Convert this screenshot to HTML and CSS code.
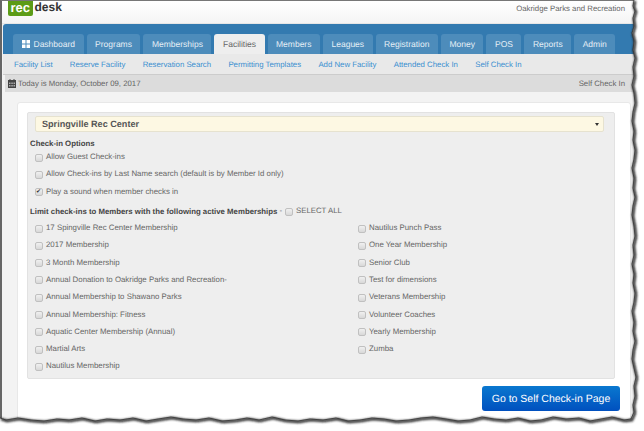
FILE: index.html
```html
<!DOCTYPE html>
<html lang="en">
<head>
    <meta charset="UTF-8">
    <title>Self Check-in Setup</title>
    <link rel="stylesheet" href="styles.css">
</head>
<body>
    <div class="window">
        <header class="top">
            <div class="logo"><span class="logo-rec">rec</span><span class="logo-desk">desk</span></div>
            <div class="org">Oakridge Parks and Recreation</div>
        </header>

        <nav class="tabs">
            <a class="tab">
                <svg class="dash-icon" width="8" height="8" viewBox="0 0 8 8"><path fill="#fff" d="M0 0h3.5v3.5H0zM4.500 0H8v3.500H4.500zM0 4.500h3.500V8H0zM4.500 4.500H8V8H4.500z"/></svg>
                Dashboard
            </a>
            <a class="tab">Programs</a>
            <a class="tab">Memberships</a>
            <a class="tab active">Facilities</a>
            <a class="tab">Members</a>
            <a class="tab">Leagues</a>
            <a class="tab">Registration</a>
            <a class="tab">Money</a>
            <a class="tab">POS</a>
            <a class="tab">Reports</a>
            <a class="tab">Admin</a>
        </nav>

        <div class="subnav">
            <a>Facility List</a>
            <a>Reserve Facility</a>
            <a>Reservation Search</a>
            <a>Permitting Templates</a>
            <a>Add New Facility</a>
            <a>Attended Check In</a>
            <a>Self Check In</a>
        </div>

        <div class="datebar">
            <span class="date">
                <svg width="8" height="9" viewBox="0 0 8 9"><path fill="#444" d="M0 1h8v8H0z"/><path fill="#444" d="M1.500 0h1v2h-1zM5.500 0h1v2h-1z"/><path fill="#aaa" d="M1 3.500h1.500V5H1zM3.300 3.500h1.500V5H3.300zM5.500 3.500H7V5H5.500zM1 6h1.500v1.500H1zM3.300 6h1.500v1.500H3.300zM5.500 6H7v1.500H5.500z"/></svg>
                Today is Monday, October 09, 2017
            </span>
            <span>Self Check In</span>
        </div>

        <main class="content">
            <div class="card">
                <section class="panel">
                    <div class="select">
                        <span>Springville Rec Center</span>
                        <i class="caret"></i>
                    </div>

                    <h4 class="heading">Check-in Options</h4>
                    <label class="row"><input type="checkbox"> Allow Guest Check-ins</label>
                    <label class="row"><input type="checkbox"> Allow Check-ins by Last Name search (default is by Member Id only)</label>
                    <label class="row"><input type="checkbox" checked> Play a sound when member checks in</label>

                    <h4 class="heading limit">Limit check-ins to Members with the following active Memberships
                        <span class="select-all">- <input type="checkbox"> SELECT ALL</span>
                    </h4>

                    <div class="columns">
                        <div class="col col-left">
                            <label class="row"><input type="checkbox"> 17 Spingville Rec Center Membership</label>
                            <label class="row"><input type="checkbox"> 2017 Membership</label>
                            <label class="row"><input type="checkbox"> 3 Month Membership</label>
                            <label class="row"><input type="checkbox"> Annual Donation to Oakridge Parks and Recreation-</label>
                            <label class="row"><input type="checkbox"> Annual Membership to Shawano Parks</label>
                            <label class="row"><input type="checkbox"> Annual Membership: Fitness</label>
                            <label class="row"><input type="checkbox"> Aquatic Center Membership (Annual)</label>
                            <label class="row"><input type="checkbox"> Martial Arts</label>
                            <label class="row"><input type="checkbox"> Nautilus Membership</label>
                        </div>
                        <div class="col">
                            <label class="row"><input type="checkbox"> Nautilus Punch Pass</label>
                            <label class="row"><input type="checkbox"> One Year Membership</label>
                            <label class="row"><input type="checkbox"> Senior Club</label>
                            <label class="row"><input type="checkbox"> Test for dimensions</label>
                            <label class="row"><input type="checkbox"> Veterans Membership</label>
                            <label class="row"><input type="checkbox"> Volunteer Coaches</label>
                            <label class="row"><input type="checkbox"> Yearly Membership</label>
                            <label class="row"><input type="checkbox"> Zumba</label>
                        </div>
                    </div>
                </section>

                <div class="actions">
                    <button class="go-btn">Go to Self Check-in Page</button>
                </div>
            </div>
        </main>
    </div>

    <!-- torn paper edge of the screenshot -->
    <svg class="torn" width="644" height="431" viewBox="0 0 644 431">
        <defs>
            <filter id="edge-blur" x="-5%" y="-5%" width="110%" height="110%">
                <feGaussianBlur stdDeviation="1"/>
            </filter>
            <path id="tear-line" d="M634 0L633 6L635 11L633 18L634 26L632 33L634 41L633 50L635 58L633 67L634 76L632 85L634 93L635 103L633 112L632 121L634 131L633 140L635 150L634 159L632 168L634 178L633 188L635 197L633 206L632 215L634 226L635 236L633 245L634 255L632 264L634 274L633 283L635 293L634 302L632 311L634 322L633 331L635 341L633 350L632 359L634 368L636 377L634 386L635 396L633 405L634 412L631 419L624 420L612 417L601 419L590 421L579 418L566 419L553 417L541 420L530 421L518 418L506 420L494 419L482 417L470 420L458 421L446 419L433 417L421 418L409 420L396 421L384 419L372 418L360 420L348 421L336 418L323 420L310 419L298 421L285 420L272 417L259 420L247 418L235 420L222 421L209 418L196 420L183 419L171 417L158 419L146 421L133 418L120 420L107 419L95 421L82 418L69 420L57 419L44 421L31 420L18 418L6 420L0 418"/>
        </defs>
        <path fill="#fff" d="M644 0H634L633 6L635 11L633 18L634 26L632 33L634 41L633 50L635 58L633 67L634 76L632 85L634 93L635 103L633 112L632 121L634 131L633 140L635 150L634 159L632 168L634 178L633 188L635 197L633 206L632 215L634 226L635 236L633 245L634 255L632 264L634 274L633 283L635 293L634 302L632 311L634 322L633 331L635 341L633 350L632 359L634 368L636 377L634 386L635 396L633 405L634 412L631 419L624 420L612 417L601 419L590 421L579 418L566 419L553 417L541 420L530 421L518 418L506 420L494 419L482 417L470 420L458 421L446 419L433 417L421 418L409 420L396 421L384 419L372 418L360 420L348 421L336 418L323 420L310 419L298 421L285 420L272 417L259 420L247 418L235 420L222 421L209 418L196 420L183 419L171 417L158 419L146 421L133 418L120 420L107 419L95 421L82 418L69 420L57 419L44 421L31 420L18 418L6 420L0 418V431H644Z"/>
        <use href="#tear-line" class="tear-shadow" filter="url(#edge-blur)"/>
        <use href="#tear-line" class="tear-stroke"/>
    </svg>
</body>
</html>
```

FILE: styles.css
```css
body {
    margin: 0;
    background-color: white;
    font-family: "Liberation Sans", Arial, sans-serif;
    font-size: 8.500px;
    color: #555;
    position: relative;
    width: 644px;
    height: 431px;
    overflow: hidden;
    text-rendering: geometricPrecision;
}

.window {
    box-sizing: border-box;
    width: 634px;
    height: 425px;
    border-top: 1px solid #777;
    border-left: 2px solid #666;
    background-color: #f3f3f3;
}

.top {
    display: flex;
    justify-content: space-between;
    height: 22px;
    background: linear-gradient(#fff, #f4f4f4);
    border-bottom: 1px solid #e6e6e6;
}

.logo {
    display: flex;
    align-items: flex-start;
    margin-left: 6px;
    line-height: 13px;
    font-weight: bold;
    font-size: 13px;
}

.logo-rec {
    background-color: #5c9c17;
    color: white;
    padding: 0 2.500px;
    height: 15px;
    border-radius: 0 0 2px 2px;
}

.logo-desk {
    color: #333;
    margin-left: 2px;
    font-size: 12px;
}

.org {
    margin: 3px 9px 0 0;
    color: #666;
    font-size: 7.800px;
}

.tabs {
    display: flex;
    gap: 3px;
    height: 30px;
    margin-left: 1px;
    padding: 10px 0 0 10px;
    box-sizing: border-box;
    background-color: #337ab0;
    border-radius: 3px 0 0 0;
}

.tab {
    display: flex;
    align-items: center;
    gap: 3px;
    height: 20px;
    padding: 0 8.500px;
    background-color: #4d8cbb;
    color: #e6eff6;
    border-radius: 3px 3px 0 0;
    font-size: 8.500px;
}

.tab.active {
    background-color: #eeeeee;
    color: #666;
}

.dash-icon {
    margin-right: 1px;
}

.subnav {
    display: flex;
    gap: 17.300px;
    align-items: center;
    height: 20px;
    margin-left: 1px;
    padding: 1px 0 0 11px;
    box-sizing: border-box;
    height: 21px;
    background-color: #e9e9e9;
    border-bottom: 1px solid #ccc;
    color: #3a8fd0;
    font-size: 7.800px;
}

.datebar {
    display: flex;
    justify-content: space-between;
    align-items: center;
    height: 17px;
    margin-left: 3px;
    padding: 0 9px 0 3px;
    background-color: #dcdcdc;
    color: #666;
    font-size: 7.800px;
}

.date {
    display: flex;
    align-items: center;
    gap: 2px;
}

.content {
    padding: 10px 3px 0 15px;
}

.card {
    height: 320px;
    box-sizing: border-box;
    padding: 9px 10px 0 9px;
    background-color: white;
    border: 1px solid #e8e8e8;
    border-radius: 3px;
}

.panel {
    height: 267px;
    box-sizing: border-box;
    padding: 3px 10px 0 7px;
    margin-right: 5px;
    background-color: #eeeeee;
    border: 1px solid #e2e2e2;
    border-radius: 2px;
}

.select {
    display: flex;
    justify-content: space-between;
    align-items: center;
    height: 16px;
    padding: 0 4px 0 6px;
    background-color: #fdf8e3;
    border: 1px solid #e6e2cf;
    border-radius: 2px;
    color: #555;
    font-size: 9.100px;
    font-weight: bold;
    box-sizing: border-box;
}

.caret {
    border-left: 2px solid transparent;
    border-right: 2px solid transparent;
    border-top: 3px solid #333;
}

.heading {
    margin: 7px 0 0 -5px;
    height: 9px;
    line-height: 10px;
    font-size: 7.800px;
    font-weight: bold;
    color: #444;
}

.limit {
    margin-top: 7px;
    margin-bottom: 3px;
    display: flex;
    gap: 2px;
}

.select-all {
    display: flex;
    align-items: center;
    gap: 3px;
    font-weight: normal;
    color: #666;
}

.row {
    display: flex;
    align-items: center;
    gap: 3px;
    height: 17.300px;
    font-size: 7.850px;
    color: #666;
}

input[type="checkbox"] {
    appearance: none;
    box-sizing: border-box;
    width: 8px;
    height: 8px;
    margin: 2px 0 0;
    position: relative;
    background: linear-gradient(#f0f0f0, #d8d8d8);
    border: 1px solid #c0c0c0;
    border-radius: 2px;
}

input[type="checkbox"]:checked::after {
    content: "\2714";
    position: absolute;
    left: 0;
    top: -2px;
    font-family: "DejaVu Sans", sans-serif;
    font-size: 6px;
    color: #333;
}

.columns {
    display: flex;
}

.col-left {
    width: 323px;
}

.actions {
    display: flex;
    justify-content: flex-end;
    margin-top: 7px;
}

.go-btn {
    width: 138px;
    height: 25px;
    padding: 0;
    color: white;
    background: linear-gradient(#0a78cf, #0050bf);
    border: none;
    border-radius: 3px;
    font-family: inherit;
    font-size: 10.500px;
    text-rendering: geometricPrecision;
}

.torn {
    position: absolute;
    left: 0;
    top: 0;
}

.tear-shadow {
    fill: none;
    stroke: #222;
    stroke-width: 2.500px;
    transform: translate(1px, 1px);
}

.tear-stroke {
    fill: none;
    stroke: #333;
    stroke-width: 0.800px;
}
```
